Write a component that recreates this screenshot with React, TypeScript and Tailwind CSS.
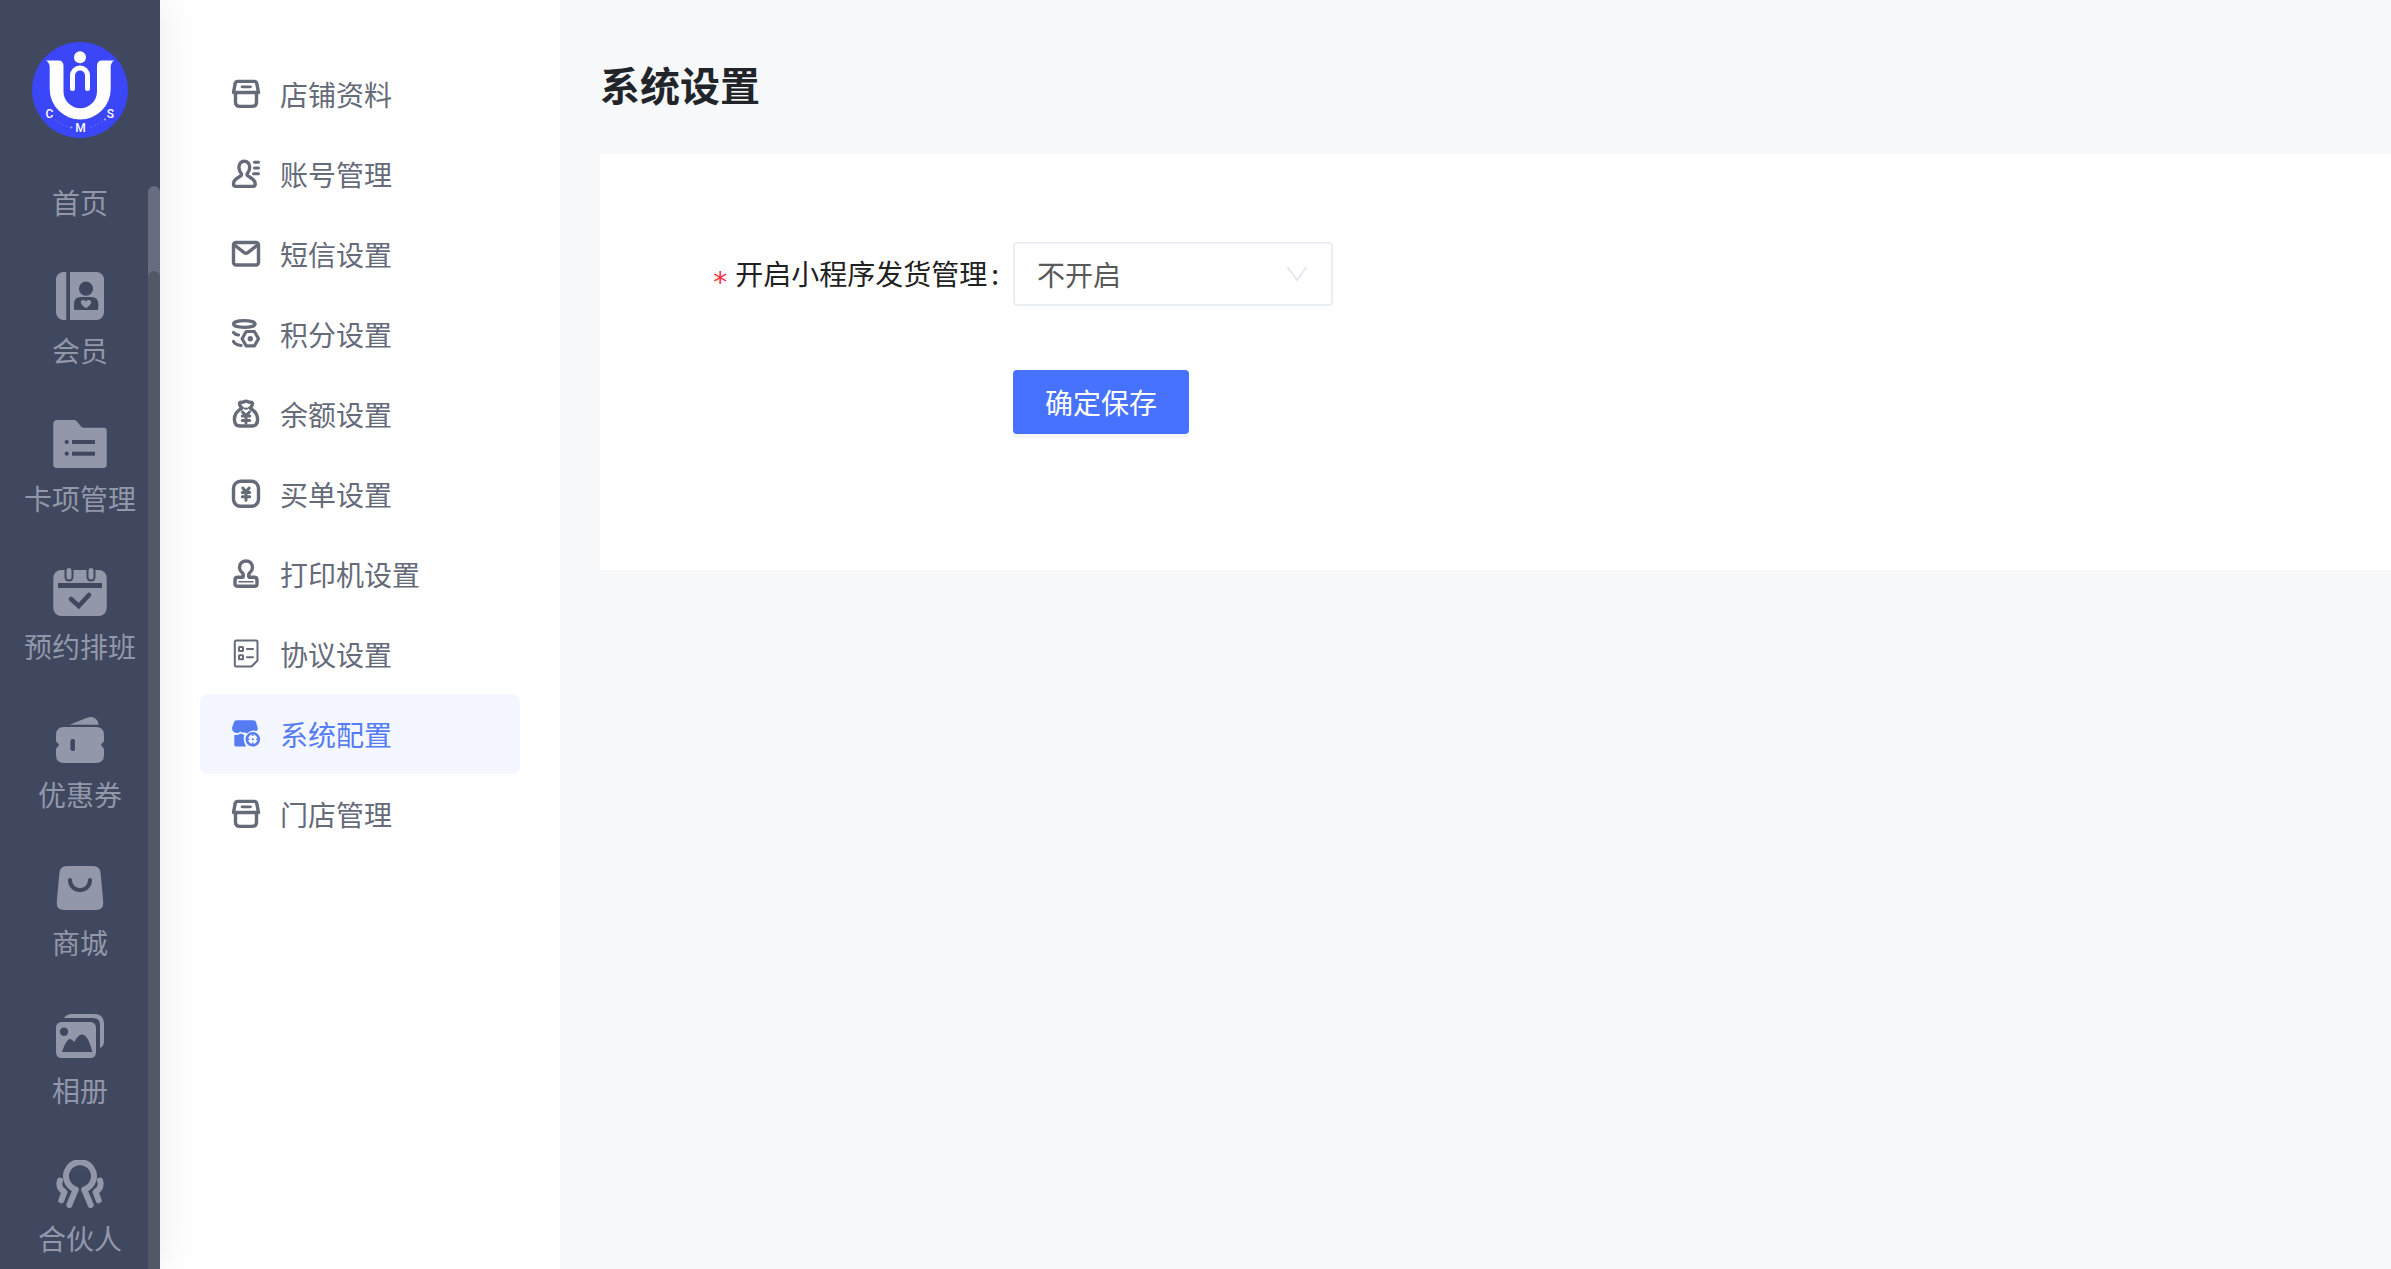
import type { ReactNode } from "react";

const BG = "#3f485e";

const stroke = {
  fill: "none",
  stroke: "currentColor",
  strokeWidth: 3.4,
  strokeLinecap: "round" as const,
  strokeLinejoin: "round" as const,
};

function Logo() {
  return (
    <svg viewBox="0 0 96 96" className="size-24" role="img" aria-label="UIN CMS">
      <circle cx="48" cy="48" r="48" fill="#3b46f8" />
      <path
        d="M14 18.5H26.5Q31.5 18.5 31.5 24V49.5A16.75 16.75 0 0 0 65 49.5V24Q65 18.5 70 18.5H82Q78.7 21 78.7 25V47A30.5 30.5 0 0 1 17.7 47V25Q17.7 21 14 18.5Z"
        fill="#fff"
      />
      <circle cx="48" cy="15.3" r="6" fill="#fff" />
      <path d="M40.5 46.5V33.5a7.5 7.5 0 0 1 15 0V46.5" fill="none" stroke="#fff" strokeWidth="5" strokeLinecap="round" />
      <path d="M23 77.500Q31 84 38 85.500M58 85.500Q66 83 73 77.500" fill="none" stroke="#686ffb" strokeWidth="1" strokeDasharray="2 2" />
      <circle cx="39.500" cy="85.500" r="1" fill="#a9aeff" />
      <circle cx="73" cy="77.500" r="1" fill="#a9aeff" />
      <g fill="#fff" fontFamily="Roboto, sans-serif" fontSize="12" fontWeight="500" textAnchor="middle">
        <text x="17.500" y="76">C</text>
        <text x="48.500" y="89.500">M</text>
        <text x="78.500" y="76">S</text>
      </g>
    </svg>
  );
}

const sideItems: { label: string; icon?: ReactNode }[] = [
  { label: "首页" },
  {
    label: "会员",
    icon: (
      <>
        <rect x="4" width="48" height="48" rx="7.500" fill="currentColor" />
        <rect x="14.300" width="3.700" height="48" fill={BG} />
        <circle cx="34" cy="16.700" r="7.100" fill={BG} />
        <path d="M22 36.500V32Q22 25 29 25H39.300Q46.300 25 46.300 32V36.500Q46.300 38 44.800 38H23.500Q22 38 22 36.500Z" fill={BG} />
        <path d="M34 36.300C30.500 33.500 28.800 32 28.800 30.200C28.800 27.700 32.300 27 34 29.500C35.700 27 39.200 27.700 39.200 30.200C39.200 32 37.500 33.500 34 36.300Z" fill="currentColor" />
      </>
    ),
  },
  {
    label: "卡项管理",
    icon: (
      <>
        <path d="M1.300 4Q1.300 0 5.300 0H22Q24 0 25 1.500L29 6.500Q30 7.700 31.500 7.700H51.500Q54.700 7.700 54.700 11V44.500Q54.700 48 51.200 48H4.800Q1.300 48 1.300 44.500Z" fill="currentColor" />
        <g fill={BG}>
          <circle cx="14.700" cy="22" r="2.100" />
          <circle cx="14.700" cy="33.700" r="2.100" />
          <rect x="20" y="20" width="23" height="4" />
          <rect x="20" y="31.700" width="23" height="4" />
        </g>
      </>
    ),
  },
  {
    label: "预约排班",
    icon: (
      <>
        <rect x="1.300" y="2" width="53.400" height="46" rx="8" fill="currentColor" />
        <g fill={BG}>
          <rect x="12.500" y="-3" width="9" height="16.500" rx="4.500" />
          <rect x="34.500" y="-3" width="9" height="16.500" rx="4.500" />
          <rect x="6" y="15" width="44" height="5" />
        </g>
        <rect x="14.500" y="0" width="5" height="11.500" rx="2.500" fill="currentColor" />
        <rect x="36.500" y="0" width="5" height="11.500" rx="2.500" fill="currentColor" />
        <path d="M19 31L26.700 38L37 27" fill="none" stroke={BG} strokeWidth="4.500" strokeLinecap="round" />
      </>
    ),
  },
  {
    label: "优惠券",
    icon: (
      <>
        <path d="M17.500 8.700L35 1.700C40.500 -0.200 45.500 2 46.700 8.700Z" fill="currentColor" />
        <path d="M12 11H44Q52 11 52 19V24.500Q52 26 50.800 26.800Q47.500 29 50.800 31.200Q52 32 52 33.500V39Q52 47 44 47H12Q4 47 4 39V33.500Q4 32 5.200 31.200Q8.500 29 5.200 26.800Q4 26 4 24.500V19Q4 11 12 11Z" fill="currentColor" />
        <rect x="18.400" y="23" width="4.600" height="12" rx="2" fill={BG} />
      </>
    ),
  },
  {
    label: "商城",
    icon: (
      <>
        <path d="M15 2H41Q48 2 48.600 9L51.300 38Q51.800 46 44 46H12Q4.200 46 4.700 38L7.400 9Q8 2 15 2Z" fill="currentColor" />
        <path d="M18 16C18 29.500 38 29.500 38 16" fill="none" stroke={BG} strokeWidth="4" strokeLinecap="round" />
      </>
    ),
  },
  {
    label: "相册",
    icon: (
      <>
        <rect x="4" y="10" width="40" height="36" rx="5.500" fill="currentColor" />
        <path d="M12 6Q14.500 2 20 2H42Q52 2 52 12V29Q52 34.500 48 36V13Q48 6 41 6Z" fill="currentColor" />
        <circle cx="12" cy="19.700" r="4.200" fill={BG} />
        <path d="M10 40C12 34 15 27 18 27C20 27 21 29.500 22.300 30C24 27.500 26.500 22.500 30 22.500C35.500 22.500 39 34 40.300 40Z" fill={BG} />
      </>
    ),
  },
  {
    label: "合伙人",
    icon: (
      <g fill="none" stroke="currentColor" strokeWidth="6" strokeLinecap="round" strokeLinejoin="round">
        <path d="M17.300 45L23.800 29.500A14 14 0 1 1 32.200 29.500L38.700 45" />
        <path d="M8 20.500C6.500 24 7 28.500 12.500 32L9.300 40.300" />
        <path d="M48 20.500C49.500 24 49 28.500 43.500 32L46.700 40.300" />
      </g>
    ),
  },
];

const boxIcon = (
  <g {...stroke}>
    <path d="M5.800 1.400H22.200Q24.300 1.400 24.800 3.500L26.500 12.500H1.500L3.200 3.500Q3.700 1.400 5.800 1.400Z" />
    <path d="M3.500 12.500V22Q3.500 26.400 8 26.400H20Q24.500 26.400 24.500 22V12.500" />
    <path d="M10 6.800H18.500" strokeWidth="2.800" />
  </g>
);

const menuItems: { label: string; icon: ReactNode; active?: boolean }[] = [
  { label: "店铺资料", icon: boxIcon },
  {
    label: "账号管理",
    icon: (
      <g {...stroke}>
        <path d="M9.500 14C7.300 11.500 6.900 9.500 6.900 7.500C6.900 3.500 9.200 1.300 12.300 1.300C15.400 1.300 17.700 3.500 17.700 7.500C17.700 9.500 17.300 11.500 15.100 14Q14.800 15 15.600 15.600L20.500 19Q23.200 21 23.200 24Q23.200 26.400 20.800 26.400H3.800Q1.500 26.400 1.500 24Q1.500 21 4.100 19L9 15.600Q9.800 15 9.500 14Z" />
        <path d="M22.500 2.300H26.500M22.500 8H26.500M21.500 13.700H26.500" strokeWidth="3" />
      </g>
    ),
  },
  {
    label: "短信设置",
    icon: (
      <g {...stroke}>
        <rect x="1.500" y="2.500" width="25" height="22.500" rx="2.500" />
        <path d="M2.500 5L12.500 12.800Q14 13.800 15.500 12.800L25.500 5" />
      </g>
    ),
  },
  {
    label: "积分设置",
    icon: (
      <g {...stroke} strokeWidth="3.2">
        <ellipse cx="12.300" cy="4" rx="10.900" ry="3.300" />
        <path d="M1.500 12.500Q3 14.500 6.500 15M1.500 21.500Q3.500 25 9 25.500" />
        <path d="M14.200 11.500H22.400L26.500 18.700L22.400 25.900H14.200L10.100 18.700Z" />
        <circle cx="18.300" cy="18.700" r="2.700" fill="currentColor" stroke="none" />
      </g>
    ),
  },
  {
    label: "余额设置",
    icon: (
      <g {...stroke}>
        <path d="M9.500 8.500L7.600 4.500Q7 2.300 9.500 2.200Q11.500 2.200 12 1.700Q14 0.500 16 1.700Q16.500 2.200 18.500 2.200Q21 2.300 20.400 4.500L18.500 8.500C23 11 25.700 15 25.600 19.500C25.500 23.500 23.500 26 20 26H8C4.500 26 2.500 23.500 2.400 19.500C2.300 15 5 11 9.500 8.500Z" />
        <path d="M10.500 7L13 9L14 8L15 9L17.500 7" strokeWidth="1.500" />
        <path d="M10.500 12L14 15.500L17.500 12M10.300 16H17.700M10.300 20.500H17.700M14 15V23" strokeWidth="3" />
      </g>
    ),
  },
  {
    label: "买单设置",
    icon: (
      <g {...stroke}>
        <rect x="1.500" y="1.300" width="25" height="25" rx="7" />
        <path d="M10.800 8L14 12L17.200 8M10.300 12.500H17.700M10.300 16.800H17.700M14 12.500V20.300" strokeWidth="3" />
      </g>
    ),
  },
  {
    label: "打印机设置",
    icon: (
      <g {...stroke}>
        <path d="M11 17.300Q12 14.500 10.300 12.800C8.500 11.200 7.500 10 7.500 7.500C7.500 3.500 10.300 1 14 1C17.700 1 20.500 3.500 20.500 7.500C20.500 10 19.500 11.200 17.700 12.800Q16 14.500 17 17.300H22Q25 17.300 25 20V24Q25 26.200 22.800 26.200H5.200Q3 26.200 3 24V20Q3 17.300 6 17.300Z" />
        <path d="M7 21.700H21" strokeWidth="1.500" />
      </g>
    ),
  },
  {
    label: "协议设置",
    icon: (
      <g {...stroke} strokeWidth="2">
        <path d="M4 0.500H24Q25.500 0.500 25.500 2V20.500L19.500 26.500H4Q2.800 26.500 2.800 25V2Q2.800 0.500 4 0.500Z" />
        <rect x="7" y="7" width="4" height="4" rx="0.500" />
        <rect x="7" y="15.200" width="4" height="4" rx="0.500" />
        <path d="M15 9H21M15 17.200H21" />
      </g>
    ),
  },
  {
    label: "系统配置",
    active: true,
    icon: (
      <>
        <path d="M4.500 0.300H21.500Q23.300 0.300 24 2L25.700 8Q26 10 24.500 11Q19 9.500 15 13.500L12.800 12.300Q11 13.500 8.500 11.500Q6 13.800 3.500 12.700Q0 11.500 0 8L2 2Q2.700 0.300 4.500 0.300Z" fill="currentColor" />
        <path d="M2.300 15Q5.500 15.500 8.500 13.500L12.300 15Q10.500 20 14 26.500H4Q2.300 26.500 2.300 25Z" fill="currentColor" />
        <circle cx="20.800" cy="19.300" r="6" {...stroke} strokeWidth="2.6" />
        <circle cx="20.800" cy="19.300" r="1.100" fill="currentColor" />
        <path d="M20.800 14.500V16M20.800 22.600V24M16 19.300H17.500M24.100 19.300H25.600" fill="none" stroke="currentColor" strokeWidth="1.500" />
      </>
    ),
  },
  { label: "门店管理", icon: boxIcon },
];

export default function App() {
  return (
    <div className="flex h-screen overflow-hidden bg-[#f7f8fa] font-['Noto_Sans_CJK_SC',sans-serif] text-[28px] leading-[44px]">
      <aside className="relative z-10 flex w-40 shrink-0 flex-col items-center bg-[#3f485e] pt-[42px] text-[#9297aa] shadow-[2px_0_40px_rgba(0,0,0,0.08)]">
        <Logo />
        <nav className="mt-[42px] flex w-full flex-col gap-12">
          {sideItems.map((item) => (
            <a key={item.label} href="#" className="flex flex-col items-center gap-2 whitespace-nowrap">
              {item.icon && (
                <svg viewBox="0 0 56 48" className="h-12 w-14" aria-hidden="true">
                  {item.icon}
                </svg>
              )}
              <span>{item.label}</span>
            </a>
          ))}
        </nav>
        <div className="absolute top-[186px] right-0 bottom-0 w-3 rounded-t-full bg-[#676c80] pt-[85px]">
          <div className="h-full rounded-t-full bg-[#525866]" />
        </div>
      </aside>

      <nav className="w-[400px] shrink-0 bg-white px-10 pt-[54px] text-[#656b79]">
        {menuItems.map((item) => (
          <a
            key={item.label}
            href="#"
            aria-current={item.active ? "page" : undefined}
            className={
              item.active
                ? "flex h-20 items-center gap-5 rounded-lg bg-[#f4f7ff] px-8 text-[#557cf2]"
                : "flex h-20 items-center gap-5 rounded-lg px-8"
            }
          >
            <svg viewBox="0 0 28 28" className="size-7 overflow-visible" aria-hidden="true">
              {item.icon}
            </svg>
            <span>{item.label}</span>
          </a>
        ))}
      </nav>

      <main className="min-w-0 flex-1 pl-10">
        <h1 className="pt-[54px] text-[40px] leading-[60px] font-bold text-[#212529]">系统设置</h1>
        <form className="mt-10 bg-white pt-[88px] pb-[136px]">
          <div className="flex items-center">
            <label htmlFor="delivery" className="w-[413px] pr-3.5 text-right text-[#212121]">
              <span className="mr-2 align-sub font-['DejaVu_Sans',sans-serif] leading-none text-[#ff3141]">*</span>
              开启小程序发货管理<span className="ml-1">:</span>
            </label>
            <div className="relative w-80">
              <select
                id="delivery"
                className="h-16 w-full appearance-none rounded-sm border-2 border-[#ebedf5] bg-white px-[22px] text-[#595959]"
              >
                <option>不开启</option>
                <option>开启</option>
              </select>
              <svg viewBox="0 0 20 16" className="pointer-events-none absolute top-6 right-[26px] h-4 w-5" aria-hidden="true">
                <path d="M0.500 1L10 14L19.500 1" fill="none" stroke="#e6e8f2" strokeWidth="2" />
              </svg>
            </div>
          </div>
          <button
            type="button"
            className="mt-16 ml-[413px] h-16 w-44 rounded-sm bg-[#4672ff] text-white shadow-[0_4px_0_rgba(0,0,0,0.04)]"
          >
            确定保存
          </button>
        </form>
      </main>
    </div>
  );
}
